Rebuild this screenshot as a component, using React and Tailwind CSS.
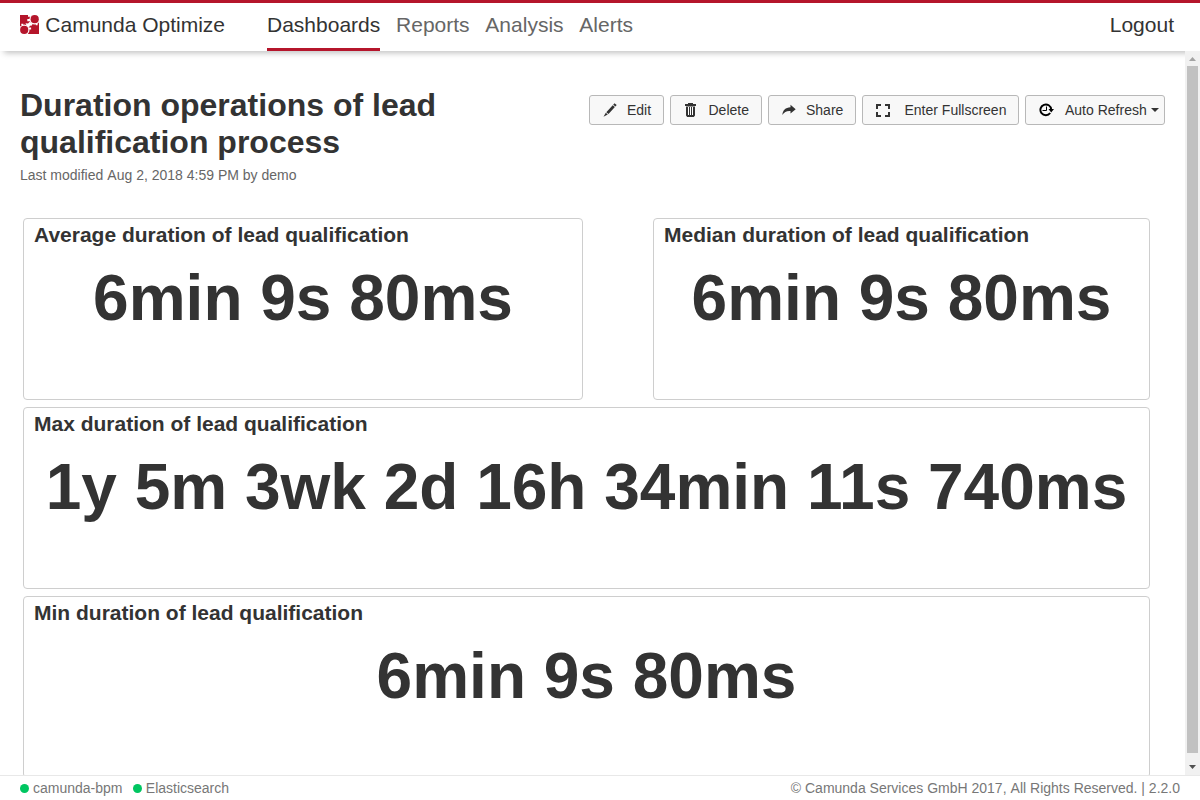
import React from 'react';

const RED = '#b5152b';

function Logo() {
  return (
    <svg className="block h-[19px] w-[19px] shrink-0" viewBox="0 0 19 19">
      <rect width="19" height="19" fill={RED} />
      <g fill="#fff">
        <rect x="12" y="0" width="7" height="5" />
        <rect x="0" y="14" width="5" height="5" />
        <circle cx="14.700" cy="4.200" r="5.300" />
        <circle cx="4.200" cy="14.900" r="5.300" />
        <path d="M8 0h3v1.800H8zM7.300 4h3v2.300h-3zM15.800 8.500h1.800v1.700h-1.800zM1.300 8.800h2v1.500h-2zM8.800 12.500h2.300v2H8.800z" />
        <path d="M5.500 8.200L8 8.600 9.800 6.800l2.700 1.900-.6 1.800-2 .2-1 1.800-2.200-1.700z" />
      </g>
      <circle cx="14.700" cy="4.200" r="4.100" fill={RED} />
      <circle cx="4.200" cy="14.900" r="4.100" fill={RED} />
    </svg>
  );
}

function EditIcon() {
  return (
    <svg className="block h-[14px] w-[14px]" viewBox="0 0 14 14" fill="#333">
      <path d="M11.500.200l2.200 1.900-1.300 1.500-2.200-1.900zM9.700 2.200l2.200 1.900-6.400 7-2.200-1.900zM2.800 9.800l2 1.700L.5 13.700z" />
    </svg>
  );
}

function TrashIcon() {
  return (
    <svg className="block h-[14px] w-[14px]" viewBox="0 0 14 14">
      <path fill="#333" d="M4 0h5v1h3v2H1V1h3zM2 3.500h9v9.100L9.800 14H3.200L2 12.600z" />
      <path fill="#fff" d="M4 4h1v8H4zM6 4h1v8H6zM8 4h1v8H8z" />
    </svg>
  );
}

function ShareIcon() {
  return (
    <svg className="block h-[14px] w-[14px]" viewBox="0 0 14 14" fill="#333">
      <path d="M8.500 1.700L13.700 6.200 8.500 10.400V8.100C4.800 7.800 2.200 8.900.4 12 .600 7.600 3.500 4.400 8.500 4.300z" />
    </svg>
  );
}

function FullscreenIcon() {
  return (
    <svg className="block h-[14px] w-[14px]" viewBox="0 0 14 14" fill="none" stroke="#333" strokeWidth="2">
      <path d="M5 2H1v4M9 2h4v4M1 9v4h4M13 9v4H9" />
    </svg>
  );
}

function RefreshIcon() {
  return (
    <svg className="block h-[14px] w-[15px]" viewBox="0 0 15 14">
      <path fill="none" stroke="#000" strokeWidth="1.900" d="M11.200 10A5.400 5.400 0 1 1 12.200 6.500" />
      <path fill="#000" d="M9.500 6H15L12.200 9.500z" />
      <path fill="none" stroke="#000" strokeWidth="1" d="M7.500 3.500v4H3.500" />
    </svg>
  );
}

function Button({ icon, label, width, slot = 'w-6', caret }) {
  return (
    <button className={`flex h-[30px] items-center rounded-[3px] border border-[#b8b8b8] bg-[#f8f8f8] pl-[13px] text-sm text-[#333] ${width}`}>
      <span className={`flex shrink-0 ${slot}`}>{icon}</span>
      <span className="whitespace-nowrap">{label}</span>
      {caret && <span className="ml-1 border-x-4 border-t-4 border-x-transparent border-t-[#333]" />}
    </button>
  );
}

function Card({ title, value, className }) {
  return (
    <section className={`h-[182px] shrink-0 rounded-[4px] border border-[#cecece] bg-white ${className}`}>
      <h2 className="pl-[10px] pt-1 text-[21px] font-bold leading-6">{title}</h2>
      <div className="mt-[14px] whitespace-nowrap text-center text-[64px] font-bold leading-[74px]">{value}</div>
    </section>
  );
}

function NavItem({ label, active }) {
  return (
    <a className={`h-12 border-b-[3px] leading-[43px] ${active ? 'border-[#b5152b] text-[#333]' : 'border-transparent text-[#666]'}`}>
      {label}
    </a>
  );
}

export default function App() {
  return (
    <div className="flex h-[800px] w-[1200px] flex-col overflow-hidden bg-white font-['Liberation_Sans',Arial,sans-serif] text-[#333]">
      <header className="relative flex h-[51px] shrink-0 border-t-[3px] border-[#b5152b] bg-white pl-5 pr-[26px] text-[21px] shadow-[0px_6px_6px_-4px_rgba(0,0,0,0.25)]">
        <div className="flex w-[247px] items-start">
          <div className="pt-3"><Logo /></div>
          <span className="ml-[6.3px] leading-[43px]">Camunda Optimize</span>
        </div>
        <nav className="flex flex-1 gap-[15.8px]">
          <NavItem label="Dashboards" active />
          <NavItem label="Reports" />
          <NavItem label="Analysis" />
          <NavItem label="Alerts" />
        </nav>
        <a className="leading-[43px]">Logout</a>
      </header>

      <div className="flex min-h-0 flex-1">
        <main className="w-[1185px] overflow-hidden">
          <div className="flex h-[167px] justify-between pl-5 pr-5 pt-[36px]">
            <div className="w-[460px]">
              <h1 className="text-[32px] font-bold leading-[37px]">Duration operations of lead qualification process</h1>
              <p className="mt-[6px] text-sm leading-4 text-[#666]">Last modified <span className="ml-[0.2px]">Aug 2, 2018 4:59 PM by demo</span></p>
            </div>
            <div className="flex gap-[6px] pt-2">
              <Button icon={<EditIcon />} label="Edit" width="w-[75px]" />
              <Button icon={<TrashIcon />} label="Delete" width="w-[92px]" slot="w-[24.5px]" />
              <Button icon={<ShareIcon />} label="Share" width="w-[88px]" />
              <Button icon={<FullscreenIcon />} label="Enter Fullscreen" width="w-[157px]" slot="w-[28.5px]" />
              <Button icon={<RefreshIcon />} label="Auto Refresh" width="w-[140px]" slot="w-[26px]" caret />
            </div>
          </div>
          <div className="flex flex-col gap-[7px] pl-[23px] pr-[35px]">
            <div className="flex justify-between">
              <Card title="Average duration of lead qualification" value="6min 9s 80ms" className="w-[560px]" />
              <Card title="Median duration of lead qualification" value="6min 9s 80ms" className="w-[497px]" />
            </div>
            <Card title="Max duration of lead qualification" value="1y 5m 3wk 2d 16h 34min 11s 740ms" className="w-full" />
            <Card title="Min duration of lead qualification" value="6min 9s 80ms" className="w-full" />
          </div>
        </main>
        <div className="relative z-10 flex w-[15px] flex-col items-center bg-[#f1f1f1]">
          <div className="flex h-[15px] items-center">
            <svg className="h-1 w-[7px]" viewBox="0 0 7 4"><path d="M0 4h7L3.500 0z" fill="#a3a3a3" /></svg>
          </div>
          <div className="h-[687px] w-[11px] bg-[#c1c1c1]" />
          <div className="flex flex-1 items-center">
            <svg className="mt-[6px] h-1 w-[7px]" viewBox="0 0 7 4"><path d="M0 0h7L3.500 4z" fill="#505050" /></svg>
          </div>
        </div>
      </div>

      <footer className="flex h-[25px] shrink-0 items-center border-t border-[#e8e8e8] bg-white px-5 text-sm text-[#777]">
        <span className="h-[9px] w-[9px] rounded-full bg-[#00c661]" />
        <span className="ml-1">camunda-bpm</span>
        <span className="ml-[10px] h-[9px] w-[9px] rounded-full bg-[#00c661]" />
        <span className="ml-[4.3px]">Elasticsearch</span>
        <span className="ml-auto">© Camunda Services GmbH 2017, <span className="ml-[0.2px]">All Rights Reserved. | 2.2.0</span></span>
      </footer>
    </div>
  );
}
